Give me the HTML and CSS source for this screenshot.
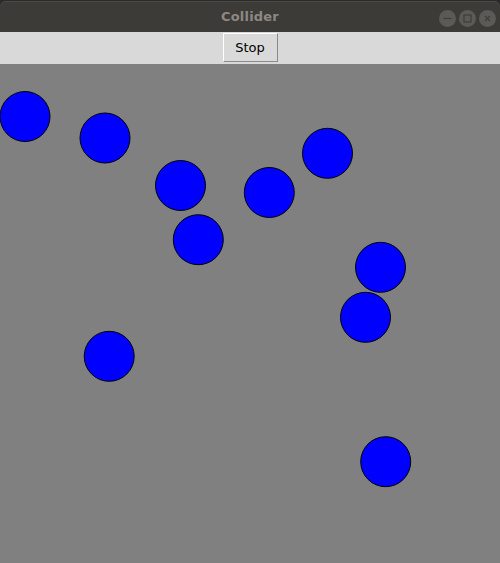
FILE: index.html
```html
<!DOCTYPE html>
<html>
<head>
<meta charset="utf-8">
<link rel="stylesheet" href="styles.css">
</head>
<body>
<div class="window">
  <div class="titlebar">
    <span class="title">Collider</span>
    <div class="controls">
      <span class="ctl"><svg width="17" height="17" viewBox="0 0 17 17"><line x1="4.5" y1="8.5" x2="12.5" y2="8.5" stroke="#3e3d39" stroke-width="1.2"/></svg></span>
      <span class="ctl"><svg width="17" height="17" viewBox="0 0 17 17"><rect x="5" y="5" width="7" height="7" fill="none" stroke="#3e3d39" stroke-width="1.2"/></svg></span>
      <span class="ctl"><svg width="17" height="17" viewBox="0 0 17 17"><path d="M6 6 L11 11 M11 6 L6 11" stroke="#3e3d39" stroke-width="1.2"/></svg></span>
    </div>
  </div>
  <div class="toolbar">
    <button class="btn">Stop</button>
  </div>
  <svg class="canvas" width="500" height="499" viewBox="0 64 500 499">
    <g fill="#0000ff" stroke="#000" stroke-width="1">
      <circle cx="25" cy="116.5" r="25"/>
      <circle cx="105" cy="138" r="25"/>
      <circle cx="180.5" cy="185.5" r="25"/>
      <circle cx="269.3" cy="192.5" r="25"/>
      <circle cx="327.5" cy="153.3" r="25"/>
      <circle cx="198.3" cy="239.7" r="25"/>
      <circle cx="380.5" cy="267.3" r="25"/>
      <circle cx="365.5" cy="317.3" r="25"/>
      <circle cx="109.2" cy="356.3" r="25"/>
      <circle cx="385.7" cy="461.7" r="25"/>
    </g>
  </svg>
</div>
</body>
</html>
```
FILE: styles.css
```css
html, body {
  margin: 0;
  padding: 0;
  background: #808080;
}
.window {
  width: 500px;
  height: 563px;
  display: flex;
  flex-direction: column;
  overflow: hidden;
  background: #2b2b2b;
}
.titlebar {
  height: 31px;
  margin-top: 1px;
  background: #3c3b37;
  border-radius: 6px 6px 0 0;
  box-shadow: inset 0 1px 0 #4a4945;
  position: relative;
  display: flex;
  align-items: center;
  justify-content: center;
}
.title {
  font-family: "DejaVu Sans", sans-serif;
  font-weight: bold;
  font-size: 13px;
  color: #8b8984;
  letter-spacing: 0.2px;
}
.controls {
  position: absolute;
  right: 4px;
  top: 9px;
  display: flex;
  gap: 3px;
}
.ctl {
  width: 17px;
  height: 17px;
  border-radius: 50%;
  background: #5b5a56;
  display: flex;
}
.toolbar {
  height: 32px;
  background: #d9d9d9;
  display: flex;
  justify-content: center;
  align-items: flex-start;
}
.btn {
  margin: 1px 0 0 0;
  width: 55px;
  height: 29px;
  padding: 0;
  background: #d9d9d9;
  border: 1px solid;
  border-color: #ffffff #8a8a8a #8a8a8a #ffffff;
  font-family: "DejaVu Sans", sans-serif;
  font-size: 13px;
  color: #000;
  border-radius: 0;
}
.canvas {
  display: block;
  background: #808080;
}
```
